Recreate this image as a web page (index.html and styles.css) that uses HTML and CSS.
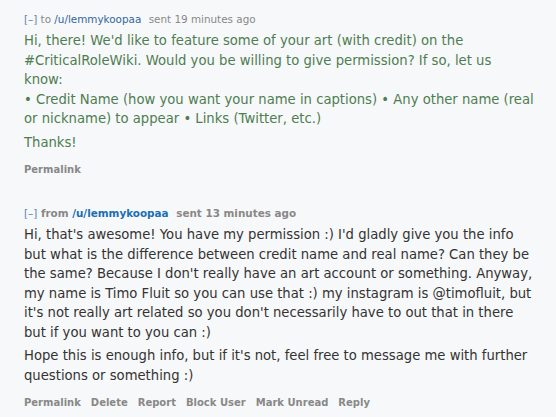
FILE: index.html
```html
<!DOCTYPE html>
<html>
<head>
<meta charset="utf-8">
<link rel="stylesheet" href="styles.css">
</head>
<body>
<div class="thread">
  <div class="message sent">
    <p class="tagline"><a class="expand">[–]</a> to <a class="author">/u/lemmykoopaa</a> <span class="time">sent 19 minutes ago</span></p>
    <div class="md">
      <p>Hi, there! We'd like to feature some of your art (with credit) on the #CriticalRoleWiki. Would you be willing to give permission? If so, let us know:<br>• Credit Name (how you want your name in captions) • Any other name (real or nickname) to appear • Links (Twitter, etc.)</p>
      <p>Thanks!</p>
    </div>
    <ul class="buttons"><li>Permalink</li></ul>
  </div>
  <div class="message received">
    <p class="tagline"><a class="expand">[–]</a> from <a class="author">/u/lemmykoopaa</a> <span class="time">sent 13 minutes ago</span></p>
    <div class="md">
      <p>Hi, that's awesome! You have my permission :) I'd gladly give you the info but what is the difference between credit name and real name? Can they be the same? Because I don't really have an art account or something. Anyway, my name is Timo Fluit so you can use that :) my instagram is @timofluit, but it's not really art related so you don't necessarily have to out that in there but if you want to you can :)</p>
      <p>Hope this is enough info, but if it's not, feel free to message me with further questions or something :)</p>
    </div>
    <ul class="buttons"><li>Permalink</li><li>Delete</li><li>Report</li><li>Block User</li><li>Mark Unread</li><li>Reply</li></ul>
  </div>
</div>
</body>
</html>
```
FILE: styles.css
```css
html, body {
  margin: 0;
  padding: 0;
  background: #f7f8f9;
}
body {
  font-family: "DejaVu Sans", Verdana, sans-serif;
}
.thread {
  padding: 10px 0 0 24px;
}
.message {
  margin-bottom: 25px;
}
.message:last-child {
  margin-bottom: 0;
}
.tagline {
  margin: 0 0 3px 0;
  font-size: 10.4px;
  line-height: 18px;
  color: #888;
}
.tagline a {
  text-decoration: none;
}
.expand {
  color: #369;
  opacity: 0.8;
}
.author {
  color: #369;
}
.time {
  margin-left: 4px;
}
.received .tagline {
  font-weight: bold;
}
.received .tagline .author {
  color: #1a6fb5;
}
.received .tagline .expand {
  font-weight: normal;
}
.md {
  font-size: 13.2px;
  line-height: 19.5px;
  max-width: 510px;
}
.md p {
  margin: 0 0 4px 0;
}
.sent .md {
  color: #4e7d52;
}
.received .md {
  color: #333;
}
.buttons {
  list-style: none;
  margin: 0;
  padding: 5px 0 0 0;
  display: flex;
  gap: 10px;
  font-size: 10px;
  font-weight: bold;
  line-height: 18px;
  color: #888;
}
```
